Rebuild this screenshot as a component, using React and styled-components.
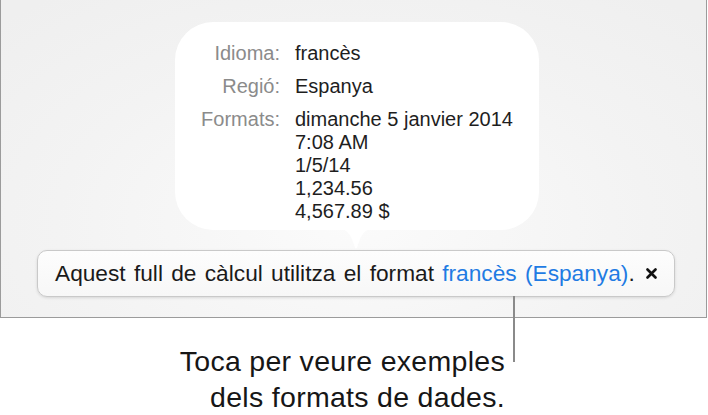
import React from "react";
import styled, { createGlobalStyle } from "styled-components";

const Global = createGlobalStyle`
  html, body { margin: 0; padding: 0; background: #ffffff; }
  body { font-family: "Liberation Sans", Arial, sans-serif; }
`;

const Page = styled.div`
  width: 708px;
  height: 415px;
  display: flex;
  flex-direction: column;
  overflow: hidden;
`;

const Panel = styled.div`
  width: 707px;
  height: 319px;
  box-sizing: border-box;
  border-left: 1px solid #9b9b9b;
  border-right: 1px solid #9b9b9b;
  border-bottom: 1px solid #9b9b9b;
  background: radial-gradient(ellipse 70% 90% at 50% 70%, #fbfbfb 0%, #f3f3f3 60%, #efefef 100%);
  display: flex;
  flex-direction: column;
  align-items: flex-start;
  padding-top: 22px;
`;

const Bubble = styled.div`
  position: relative;
  margin-left: 174px;
  width: 364px;
  height: 208px;
  box-sizing: border-box;
  background: #ffffff;
  border-radius: 38px;
  padding: 20px 0 0 0;
  display: grid;
  grid-template-columns: 105px auto;
  column-gap: 15px;
  row-gap: 10px;
  align-content: start;
  font-size: 20px;
  line-height: 23px;
`;

const Tail = styled.svg`
  position: absolute;
  left: 163px;
  top: calc(100% - 1px);
  width: 36px;
  height: 21px;
  display: block;
`;

const Label = styled.div`
  color: #8b8b8b;
  text-align: right;
`;

const Value = styled.div`
  color: #1e1e1e;
  display: flex;
  flex-direction: column;
`;

const Banner = styled.div`
  position: relative;
  margin-top: 20px;
  margin-left: 36px;
  width: 638px;
  height: 47px;
  box-sizing: border-box;
  border: 1px solid #c9c9c9;
  border-radius: 10px;
  background: linear-gradient(#fdfdfd, #f7f7f7);
  box-shadow: 0 1px 3px rgba(0, 0, 0, 0.12);
  display: flex;
  align-items: center;
  padding: 0 10px 0 17px;
  font-size: 22.7px;
  word-spacing: 2px;
  color: #1a1a1a;
  white-space: nowrap;
`;

const Message = styled.span`
  flex-shrink: 0;
`;

const Link = styled.span`
  color: #1f7be3;
`;

const Close = styled.svg`
  flex-shrink: 0;
  margin-left: 11px;
  width: 11px;
  height: 11px;
  display: block;
`;

const Leader = styled.div`
  position: absolute;
  left: 475px;
  top: 100%;
  width: 1.5px;
  height: 66px;
  background: #8a8a8a;
`;

const Caption = styled.div`
  margin-top: 25px;
  width: 505px;
  text-align: right;
  font-size: 28.5px;
  line-height: 36px;
  color: #161616;
  letter-spacing: 0.3px;
`;

export default function App() {
  return (
    <>
      <Global />
      <Page>
        <Panel>
          <Bubble>
            <Label>Idioma:</Label>
            <Value>francès</Value>
            <Label>Regió:</Label>
            <Value>Espanya</Value>
            <Label>Formats:</Label>
            <Value>
              <span>dimanche 5 janvier 2014</span>
              <span>7:08 AM</span>
              <span>1/5/14</span>
              <span>1,234.56</span>
              <span>4,567.89 $</span>
            </Value>
            <Tail viewBox="0 0 36 21">
              <path
                d="M0 0 C8 0 10 3 13.5 9 L17 18.5 Q18 20.5 19 18.5 L22.5 9 C26 3 28 0 36 0 Z"
                fill="#ffffff"
              />
            </Tail>
          </Bubble>
          <Banner>
            <Message>
              Aquest full de càlcul utilitza el format <Link>francès (Espanya)</Link>.
            </Message>
            <Close viewBox="0 0 11 11">
              <path d="M1.5 1.5 L9.5 9.5 M9.5 1.5 L1.5 9.5" stroke="#111" strokeWidth="2.6" strokeLinecap="round" />
            </Close>
            <Leader />
          </Banner>
        </Panel>
        <Caption>
          Toca per veure exemples
          <br />
          dels formats de dades.
        </Caption>
      </Page>
    </>
  );
}
